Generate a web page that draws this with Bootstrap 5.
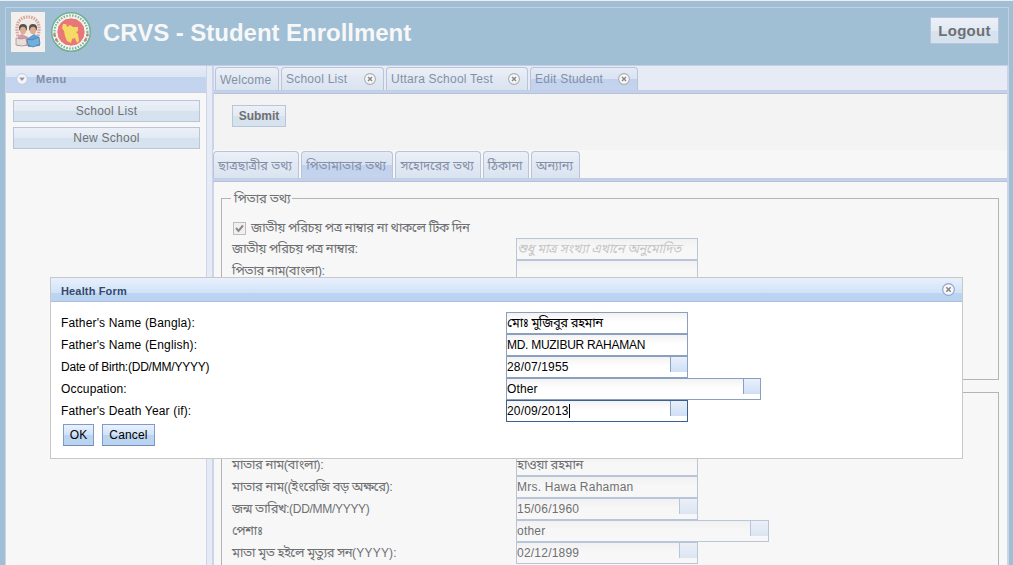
<!DOCTYPE html>
<html lang="bn">
<head>
<meta charset="utf-8">
<meta name="viewport" content="width=device-width, initial-scale=1">
<title>CRVS - Student Enrollment</title>
<link href="https://cdn.jsdelivr.net/npm/bootstrap@5.3.0/dist/css/bootstrap.min.css" rel="stylesheet">
<style>
html,body{height:100%}
body{font:12px/16px "Liberation Sans","Noto Sans Bengali",sans-serif;background:#a0bfd5;color:#6f7073;overflow:hidden;border-top:1px solid #ededed}
.shell{margin:0 4px 0 5px;padding-top:6px;height:564px}
.topbar{height:59px;border:1px solid #c4cfe6;padding:4px 9px 0 5px}
.topbar h1{font-size:24px;line-height:28px;color:#f7f7f7;letter-spacing:-.03px;margin:7px 0 0 11px}
.xbtn{border:1px solid #b9c6d9;border-radius:0;background:linear-gradient(#ecf0f8 0,#e2eaf4 50%,#d6e3ef 51%,#d6e3ef);color:#6f7073;padding:0;font-size:12px;line-height:20px;height:22px;letter-spacing:.25px}
.logout{width:69px;height:27px;font-size:15px;line-height:24px;font-weight:bold;margin-top:5px}
.seal{margin-left:5px}
.west{width:202px;background:#f7f7f7;border:1px solid #cdd5e8;border-top:0}
.west-head{height:27px;background:linear-gradient(#e7ecf6 0,#dce5f3 11px,#c2d3ee 11px,#c4d4ef);border-bottom:1px solid #c8cde4;color:#8390a8;font-size:11px;font-weight:bold;letter-spacing:.5px;padding-left:10px}
.west-menu{padding:7px 6px 0 7px;gap:5px}
.split{width:5px;background:#e6ebf5}
.center-pane{background:#f7f7f7;border-left:2px solid #cbd4e9;border-right:2px solid #cbd4e9;min-width:0}
.tabstrip{background:#e6ebf5;height:28px;border-bottom:1px solid #b6c1d9;padding:1px 0 0 1px;gap:2px}
.tabstrip::after{content:"";position:absolute;left:0;right:0;bottom:0;height:3px;background:#c3d2ec;border-top:1px solid #c3cce0}
.xtab{height:23px;border:1px solid #b9c4d9;border-bottom:0;border-radius:4px 4px 0 0;background:linear-gradient(#ecf0f7,#e1e8f3 50%,#d9e4f0);color:#8390a8;padding:0 5px 0 4px;line-height:24px;white-space:nowrap;letter-spacing:.23px}
.xtab.active{background:linear-gradient(#e4eaf5,#d9e3f3 48%,#c2d2ec 50%,#c4d4ee)}
.toolbar{height:56px;background:#f3f3f3;padding:11px 0 0 18px}
.formtabs{height:32px;padding:1px 0 0;margin-left:-1px;background:#f7f7f7}
.formtabs .xtab{height:28px;font-size:12.75px;line-height:27px;letter-spacing:-.08px;padding:0;padding-right:2px;text-align:center}
.form-area{padding-top:16px}
.bn{font-size:13px;letter-spacing:-.5px}
.group{border:1px solid #b4b4b4;margin:0 8px 0 7px;height:182px;position:relative;padding:17px 0 0 10px}
.group+.group{margin-top:12px;height:200px}
.group-title{position:absolute;left:9px;top:-10px;background:#f7f7f7;padding:0 2px 0 3px;line-height:20px;font-size:13px;letter-spacing:-.25px}
.frow{height:22px;line-height:21px;white-space:nowrap}
.check-label{line-height:23px}
.flabel{width:284px;flex:none}
.xinput{height:22px;width:182px;border:1px solid #b9c6d9;background:linear-gradient(#f1f1f1,#f7f7f7 45%);line-height:20px;letter-spacing:.22px;position:relative;white-space:nowrap}
.xinput.wide{width:253px}
.xinput.bn{letter-spacing:-.4px}
.pick::after{content:"";position:absolute;right:0;top:0;width:18px;height:15px;border-left:1px solid #b9c6d9;background:linear-gradient(#ebeff8,#dae6f2)}
.skip{height:44px}
.mask{letter-spacing:-.3px;font-size:12px}
.hint{font-style:italic;color:#c6c6c6}
.tick{width:13px;height:13px;border:1px solid #bdbdbd;background:#f0f0f0;margin:6px 5px 0 1px}
.dialogbox{position:absolute;left:50px;top:277px;width:913px;height:182px;background:#fff;border:1px solid #c8c8c8;color:#000}
.dlg-head{height:24px;background:linear-gradient(#e9f0fd,#d0e2f8 15px,#bad4f1 15px,#b9d3f0);border-bottom:1px solid #a9bfdf;font-size:11px;font-weight:bold;color:#33496b;padding:3px 7px 0 10px;letter-spacing:.15px}
.dlg-body{padding:10px}
.dlg-body .flabel{width:445px;letter-spacing:.16px;line-height:23px}
.dlg-body .flabel.tight{letter-spacing:-.22px}
.dlg-body .xinput{border-color:#8ba0bf;background:linear-gradient(#f2f2f2,#fff 45%);letter-spacing:.15px}
.dlg-body .xinput.bn{letter-spacing:-.5px}
.dlg-body .xinput.caps{letter-spacing:-.28px}
.dlg-body .xinput.wide{width:255px}
.dlg-body .pick::after{width:17px;border-color:#8ba0bf;background:linear-gradient(#e9effc,#cee0f6)}
.dlg-body .xinput.focused{border-color:#39608f}
.caret{display:inline-block;width:1px;height:14px;background:#000;vertical-align:-3px}
.dlg-actions{padding:2px 0 0 2px;gap:8px}
.dlg-body .xbtn{border-color:#7f9bc6 #7f9bc6 #6f8bb6;background:linear-gradient(#eaf1fd,#cfe1f8 50%,#bad4f1 51%,#b9d3f0);color:#000;letter-spacing:.15px}
</style>
</head>
<body>
<svg width="0" height="0" class="position-absolute">
<symbol id="close" viewBox="0 0 12 12"><circle cx="6" cy="6" r="5.4" fill="#f6f7f8" stroke="currentColor" stroke-width="1.1"/><path d="M4 4l4 4M8 4L4 8" stroke="#858585" stroke-width="1.4"/></symbol>
</svg>
<div class="shell d-flex flex-column">
<header class="topbar d-flex flex-shrink-0">
<svg width="34" height="40" viewBox="0 0 34 40"><path fill="#f3efed" d="M0 0h34v40H0z"/><path d="M7 24C3 9 11 5 17 5s14 4 10 19" fill="none" stroke="#d9a8a0" stroke-width="3.2" stroke-dasharray="1.6 1"/><path d="M9 22C8 10 13 8 17 8s9 2 8 14z" fill="#f1eae1"/><circle cx="12" cy="16" r="4" fill="#55524f"/><circle cx="22" cy="16" r="4" fill="#55524f"/><ellipse cx="12" cy="18.500" rx="3" ry="3.700" fill="#dfae91"/><ellipse cx="22" cy="18.500" rx="3" ry="3.700" fill="#dfae91"/><path d="M6 34l1-10 4-2 6 3v9z" fill="#d59ca8"/><path d="M17 35v-9l6-4 5 3 1 9z" fill="#5fa0d0"/><path d="M5 26l5 1 5-1 1 7-5 1-6-1z" fill="#e8ddd8" stroke="#9e8892" stroke-width=".7"/><path d="M16 27l5 1 7-3 1 7-7 3-5-2z" fill="#72afdc" stroke="#4779a8" stroke-width=".7"/></svg>
<svg width="42" height="42" viewBox="0 0 42 42" class="seal"><circle cx="21" cy="20" r="19.3" fill="#f3f7f3" stroke="#72b091" stroke-width="1.5"/><circle cx="21" cy="20" r="16.5" fill="none" stroke="#7fb69b" stroke-width="2.2" stroke-dasharray="1.6 1.3"/><circle cx="21" cy="20" r="14.2" fill="#ea7777" stroke="#f7f7f7"/><path d="M13 12l3 0 1 3 3-2 3 2 5 0 0 4-2 1 2 2 1 7-2 2-2-5-3 1-1 4-4-2-2-5-1-5-2-3z" fill="#f5db65"/><g fill="#da6e70"><circle cx="4.5" cy="23" r="1.3"/><circle cx="37.500" cy="23" r="1.300"/><circle cx="6.500" cy="28" r="1.3"/><circle cx="35.500" cy="28" r="1.3"/></g></svg>
<h1 class="fw-bold flex-grow-1">CRVS - Student Enrollment</h1>
<button class="btn xbtn logout">Logout</button>
</header>
<div class="d-flex flex-grow-1">
<nav class="west">
<div class="west-head d-flex align-items-center"><svg width="12" height="12" viewBox="0 0 12 12" class="me-2"><circle cx="6" cy="6" r="5.3" fill="#f3f5f9" stroke="#bfcbe2"/><path d="M3.2 4.5h5.600L6 8z" fill="#92969d"/></svg><span>Menu</span></div>
<div class="west-menu d-grid"><button class="btn xbtn">School List</button><button class="btn xbtn">New School</button></div>
</nav>
<div class="split"></div>
<main class="center-pane flex-grow-1 d-flex flex-column">
<div class="tabstrip d-flex position-relative flex-shrink-0">
<div class="xtab" style="width:64px">Welcome</div>
<div class="xtab d-flex justify-content-between align-items-center" style="width:103px;padding-right:7px">School List <svg width="12" height="12" color="#a9acb2"><use href="#close"/></svg></div>
<div class="xtab d-flex justify-content-between align-items-center" style="width:142px;padding-right:7px">Uttara School Test <svg width="12" height="12" color="#a9acb2"><use href="#close"/></svg></div>
<div class="xtab active d-flex justify-content-between align-items-center" style="width:108px;padding-right:7px">Edit Student <svg width="12" height="12" color="#a9acb2"><use href="#close"/></svg></div>
</div>
<div class="toolbar flex-shrink-0"><button class="btn xbtn fw-bold" style="width:54px;letter-spacing:0">Submit</button></div>
<div class="formtabs tabstrip d-flex position-relative flex-shrink-0">
<div class="xtab" style="width:86px">ছাত্রছাত্রীর তথ্য</div><div class="xtab active" style="width:92px">পিতামাতার তথ্য</div><div class="xtab" style="width:86px">সহোদরের তথ্য</div><div class="xtab" style="width:46px">ঠিকানা</div><div class="xtab" style="width:49px">অন্যান্য</div>
</div>
<div class="form-area">
<section class="group"><div class="group-title">পিতার তথ্য</div>
<div class="frow bn d-flex"><span class="tick"><svg width="11" height="11" viewBox="0 0 11 11" class="d-block"><path d="M2 5l2.500 3L9 2.500" fill="none" stroke="#8a8a8a" stroke-width="2"/></svg></span><span class="check-label">জাতীয় পরিচয় পত্র নাম্বার না থাকলে টিক দিন</span></div>
<div class="frow d-flex"><span class="flabel bn">জাতীয় পরিচয় পত্র নাম্বার:</span><div class="xinput bn hint">শুধু মাত্র সংখ্যা এখানে অনুমোদিত</div></div>
<div class="frow d-flex"><span class="flabel bn">পিতার নাম(বাংলা):</span><div class="xinput"></div></div>
</section>
<section class="group"><div class="skip"></div>
<div class="frow d-flex"><span class="flabel bn">মাতার নাম(বাংলা):</span><div class="xinput bn">হাওয়া রহমান</div></div>
<div class="frow d-flex"><span class="flabel bn">মাতার নাম((ইংরেজি বড় অক্ষরে):</span><div class="xinput">Mrs. Hawa Rahaman</div></div>
<div class="frow d-flex"><span class="flabel bn">জন্ম তারিখ:<span class="mask">(DD/MM/YYYY)</span></span><div class="xinput pick">15/06/1960</div></div>
<div class="frow d-flex"><span class="flabel bn">পেশাঃ</span><div class="xinput pick wide">other</div></div>
<div class="frow d-flex"><span class="flabel bn">মাতা মৃত হইলে মৃত্যুর সন<span class="mask" style="letter-spacing:.2px">(YYYY):</span></span><div class="xinput pick">02/12/1899</div></div>
</section>
</div>
</main>
</div>
</div>
<div class="dialogbox" role="dialog">
<div class="dlg-head d-flex align-items-center justify-content-between"><span>Health Form</span><svg width="13" height="13" color="#93a5cf" style="margin-top:-4px"><use href="#close"/></svg></div>
<div class="dlg-body">
<div class="frow d-flex"><span class="flabel">Father's Name (Bangla):</span><div class="xinput bn">মোঃ মুজিবুর রহমান</div></div>
<div class="frow d-flex"><span class="flabel">Father's Name (English):</span><div class="xinput caps">MD. MUZIBUR RAHAMAN</div></div>
<div class="frow d-flex"><span class="flabel tight">Date of Birth:(DD/MM/YYYY)</span><div class="xinput pick">28/07/1955</div></div>
<div class="frow d-flex"><span class="flabel">Occupation:</span><div class="xinput pick wide">Other</div></div>
<div class="frow d-flex"><span class="flabel">Father's Death Year (if):</span><div class="xinput pick focused">20/09/2013<i class="caret"></i></div></div>
<div class="dlg-actions d-flex"><button class="btn xbtn" style="width:31px">OK</button><button class="btn xbtn" style="width:53px">Cancel</button></div>
</div>
</div>
<script src="https://cdn.jsdelivr.net/npm/bootstrap@5.3.0/dist/js/bootstrap.bundle.min.js"></script>
</body>
</html>
